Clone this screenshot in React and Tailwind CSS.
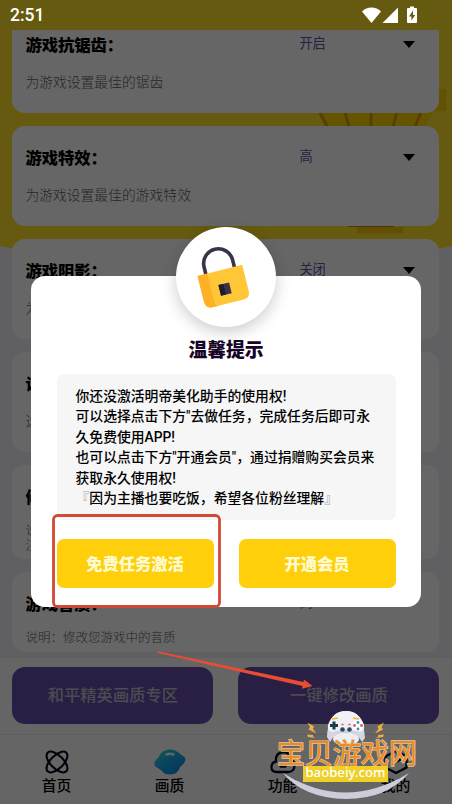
const settings = [
  { title: '游戏抗锯齿：', value: '开启', desc: '为游戏设置最佳的锯齿', box: 'h-[100px]' },
  { title: '游戏特效：', value: '高', desc: '为游戏设置最佳的游戏特效', box: 'h-[100px]' },
  { title: '游戏阴影：', value: '关闭', desc: '为游戏设置最佳的阴影', box: 'h-[100px]' },
  { title: '设备机型：', value: '', desc: '选择设备的机型', box: 'h-[100px]' },
  { title: '修改画质：', value: '', desc: '说明：修改您游戏中的画质\n注：重启游戏后生效', box: 'h-[94px]', small: true },
  { title: '游戏音质：', value: '高', desc: '说明：修改您游戏中的音质', box: 'h-[80px]', small: true },
]

const message = [
  '你还没激活明帝美化助手的使用权!',
  '可以选择点击下方"去做任务，完成任务后即可永',
  '久免费使用APP!',
  '也可以点击下方"开通会员"，通过捐赠购买会员来',
  '获取永久使用权!',
]

function StatusBar() {
  return (
    <header className="relative z-20 flex h-[30px] shrink-0 items-center justify-between bg-[#665a10] pl-[10px] pr-[34px] text-white">
      <span className="pt-[2px] font-[Roboto] text-[17.5px] font-medium leading-none">2:51</span>
      <svg width="58" height="18" viewBox="0 0 58 18" fill="#fff">
        <path d="M2 5.5C7 0 16 0 21 5.5L11.500 17Z" />
        <path d="M38 1.500V17H22.500Z" />
        <path fillRule="evenodd" d="M50 .5h4v1.500h2q1 0 1 1v13q0 1-1 1h-8q-1 0-1-1V3q0-1 1-1h2ZM53 4.500l-4 6h2.400v4l3.800-5.500h-2.200Z" />
      </svg>
    </header>
  )
}

function Backdrop() {
  return (
    <svg className="absolute inset-0" width="452" height="804" viewBox="0 0 452 804">
      <path d="M0 0H452V246Q226 292 0 246Z" fill="#ffe128" />
      <path d="M318 110H434L424 128H328Z" fill="#ffd400" />
      <path d="M419 89h27v22h-27Z" fill="#f9cd08" />
      <path d="M348 221h46v6h-46Z" fill="#d28010" />
      <path d="M357 227h46v6h-46Z" fill="#f5c60c" />
      <path d="M319.500 112l8 15M345 112l4 15M371 112v15M397 112l-4 15M421 112l-6 15" stroke="#e29a08" strokeWidth="3" fill="none" />
    </svg>
  )
}

function SettingCard({ title, value, desc, box, small }) {
  return (
    <section className={`${box} shrink-0 rounded-[13px] bg-white px-[13px] pt-[20px]`}>
      <div className="flex h-[22px] items-center">
        <h2 className="w-[274px] whitespace-nowrap text-[16.300px] font-black leading-none text-black">{title}</h2>
        <span className="mt-[-3px] w-[104px] text-[13.200px] leading-none text-[#674eaa]">{value}</span>
        <svg width="12" height="7" viewBox="0 0 12 7">
          <path d="M0 0H12L6 7Z" />
        </svg>
      </div>
      <p
        className={`whitespace-pre-line font-light text-[#606060] ${
          small ? 'mt-[15px] text-[12.500px] leading-[15px]' : 'mt-[16px] text-[13.800px] leading-[20px]'
        }`}
      >
        {desc}
      </p>
    </section>
  )
}

function HomeIcon() {
  return (
    <svg width="24" height="24" viewBox="0 0 24 24" fill="none" stroke="#05051a" strokeWidth="2.100">
      <ellipse cx="12" cy="12" rx="13.200" ry="6.500" transform="rotate(45 12 12)" />
      <ellipse cx="12" cy="12" rx="13.200" ry="6.500" transform="rotate(-45 12 12)" />
    </svg>
  )
}

function PlanetIcon() {
  return (
    <svg width="32" height="26" viewBox="0 0 32 26">
      <defs>
        <linearGradient id="planet" x1="0" y1="0" x2="1" y2="1">
          <stop stopColor="#42d6d8" />
          <stop offset=".5" stopColor="#15a8e8" />
          <stop offset="1" stopColor="#087cdf" />
        </linearGradient>
      </defs>
      <path
        d="M7 4Q11 .5 16 .5Q21 .5 25 4Q27 6 29 7Q32.500 9 31 12Q30 15 26 18Q24 25.500 16 25.500Q10 25.500 8 22Q6 20 3 18.500Q-.5 17 .5 13Q2 10 4.500 8.500Q5.500 6 7 4Z"
        fill="url(#planet)"
      />
      <path d="M12.500 5.500Q16 4 19.500 5.500" stroke="#e6ffff" strokeWidth="2.500" strokeLinecap="round" fill="none" />
    </svg>
  )
}

function CloudIcon() {
  return (
    <svg width="26" height="24" viewBox="0 0 26 24" fill="none" stroke="#05051a" strokeWidth="2.300" strokeLinecap="round">
      <path d="M7 22Q1 22 1.500 16.500Q2 12 6 11.500Q5 3 13 2Q20 2 20.500 9Q25 11 24.500 16Q24 22 18 22Z" />
      <path d="M10.500 16.500h5" />
    </svg>
  )
}

function HexIcon() {
  return (
    <svg width="26" height="26" viewBox="0 0 26 26" fill="none" stroke="#05051a" strokeWidth="2.400" strokeLinejoin="round">
      <path d="M13 2L23.500 7.500V18.500L13 24L2.500 18.500V7.500Z" />
      <path d="M8 10l5 3 5-3" />
    </svg>
  )
}

const tabs = [
  { label: '首页', Icon: HomeIcon },
  { label: '画质', Icon: PlanetIcon },
  { label: '功能', Icon: CloudIcon },
  { label: '我的', Icon: HexIcon },
]

function BottomArea() {
  return (
    <footer className="relative flex h-[146px] shrink-0 flex-col bg-[#fcfcfc]">
      <div className="flex gap-[25px] pl-[12.400px] pr-[12.600px] pt-[9px] text-[16.300px] font-medium text-[#c0bac8]">
        <button className="h-[57px] flex-1 rounded-[13px] bg-[#674eaa] pb-[3px]">和平精英画质专区</button>
        <button className="h-[57px] flex-1 rounded-[13px] bg-[#674eaa] pb-[3px]">一键修改画质</button>
      </div>
      <nav className="mt-[10px] flex flex-1 border-t border-[#e8e8e8]">
        {tabs.map(({ label, Icon }) => (
          <div key={label} className="flex flex-1 flex-col items-center pt-[13px]">
            <div className="flex h-[27px] items-center">
              <Icon />
            </div>
            <span className="text-[14.800px] font-medium leading-[20px] text-black">{label}</span>
          </div>
        ))}
      </nav>
    </footer>
  )
}

function LockBadge() {
  return (
    <div className="absolute -top-[49px] left-[145px] h-[100px] w-[100px] rounded-full bg-white shadow-[0_5px_16px_rgba(0,0,0,0.2)]">
      <svg width="100" height="100" viewBox="0 0 100 100">
        <g transform="translate(-.5 1) rotate(-14 47 53)">
          <path d="M32.500 46V35a14.700 14.700 0 0 1 29.400 0V46" fill="none" stroke="#393347" strokeWidth="3.600" />
          <path d="M24 42H70V69Q70 76 63 76H31Q24 76 24 69Z" fill="#ffc738" />
          <path d="M24 42H34V69Q34 76 38 76H31Q24 76 24 69Z" fill="#ffb126" />
          <rect x="42" y="56" width="11" height="11" fill="#393347" />
          <rect x="42" y="56" width="5" height="11" fill="#201d2a" />
        </g>
      </svg>
    </div>
  )
}

function ActivateDialog() {
  return (
    <div className="absolute left-[31px] top-[276px] z-20 flex h-[331px] w-[390px] flex-col rounded-[14px] bg-white px-[25.500px]">
      <LockBadge />
      <h1 className="relative mt-[60px] text-center text-[18.800px] font-black leading-[26px] text-[#160527]">温馨提示</h1>
      <div className="mt-[12px] h-[146px] w-[339px] whitespace-nowrap rounded-[7px] bg-[#f6f6f6] pl-[19px] pt-[11.500px] font-[Roboto,'Noto_Sans_CJK_SC',sans-serif] text-[13.820px] font-medium leading-[20.500px] text-black">
        {message.map((line) => (
          <p key={line}>{line}</p>
        ))}
        <p>
          <span className="text-[#aaa]">『</span>因为主播也要吃饭，希望各位粉丝理解<span className="text-[#aaa]">』</span>
        </p>
      </div>
      <div className="mt-[19px] flex gap-[25px] text-[16.300px] font-black text-[#fffbd0]">
        <button className="h-[49px] flex-1 rounded-[7px] bg-[#ffcf0c]">免费任务激活</button>
        <button className="h-[49px] flex-1 rounded-[7px] bg-[#ffcf0c]">开通会员</button>
      </div>
    </div>
  )
}

function Marks() {
  return (
    <svg className="absolute inset-0 z-30" width="452" height="804" viewBox="0 0 452 804">
      <rect x="53.500" y="515.500" width="166" height="91" rx="4" fill="none" stroke="#d14a35" strokeWidth="2.800" />
      <path d="M158 651.300L303.500 682L304 679.500L312.500 686L302 688.800L302.500 686L158 653Z" fill="#e84c32" />
    </svg>
  )
}

function SiteBadge() {
  return (
    <div className="absolute left-[270px] top-[700px] z-40 h-[104px] w-[160px]">
      <svg className="absolute inset-0" width="160" height="104" viewBox="0 0 160 104">
        <path d="M13 73Q75 112 139 73Q117 99 76 99Q33 98 13 73Z" fill="#cdccdb" />
        <path d="M57 37C58 21 63 11 76 11S94 21 95 38L92 42Q88 35 83 34Q76 31 69 34Q64 35 60 42Z" fill="#d5d5e2" />
        <path d="M58 25Q63 11 76 11Q89 11 94 25Q95 31 90 32Q76 27 62 32Q57 31 58 25Z" fill="#f0f0f5" />
        <ellipse cx="76" cy="39" rx="13" ry="6.500" fill="#eeeef2" />
        <path d="M60 25.500h8M64 21.500v8" stroke="#173c50" strokeWidth="3" />
        <circle cx="88" cy="25.500" r="5.500" fill="#fff" />
        <g fill="#e45364">
          <circle cx="84.500" cy="25.500" r="1.400" />
          <circle cx="91.500" cy="25.500" r="1.400" />
        </g>
        <g fill="#269bb0">
          <circle cx="88" cy="22.500" r="1.400" />
          <circle cx="88" cy="29" r="1.400" />
        </g>
        <g fill="#244d61">
          <circle cx="72.500" cy="29.500" r="2.300" />
          <circle cx="79.500" cy="29.500" r="2.300" />
        </g>
        <path d="M62 19l6-1M83 18l6 1" stroke="#edb337" strokeWidth="1.500" />
        <path d="M71.500 24.500h2M78.500 24.500h2" stroke="#e45364" strokeWidth="1.500" />
        <path
          d="M37.500 22.500l6.500 4-1 2.500 3.500 4.500-8-4 1.500-2.500ZM37 34.500l6 .5v1.500l2 1.500-7-1ZM114 22.500l-6.500 4 1 2.500-3.500 4.500 8-4-1.500-2.500ZM114 34.500l-6 .5v1.500l-2 1.500 7-1Z"
          fill="#efb03d"
        />
      </svg>
      <div className="absolute left-[7px] top-[36px] whitespace-nowrap text-[28px] font-normal leading-[32px] text-[#f08a1e] [-webkit-text-stroke:1.400px_#dcc9a8] [paint-order:stroke_fill]">
        宝贝游戏网
      </div>
      <div className="absolute left-[33px] top-[66px] flex h-[16px] w-[85px] items-center justify-center bg-[#efcf28] pb-[2px] font-['Noto_Sans'] text-[13.200px] font-medium leading-none text-white">
        baobeiy.com
      </div>
    </div>
  )
}

export default function App() {
  return (
    <div className="relative flex h-[804px] w-[452px] flex-col overflow-hidden bg-[#f1f1f7] font-['Noto_Sans_CJK_SC',sans-serif]">
      <Backdrop />
      <StatusBar />
      <main className="relative min-h-0 flex-1 overflow-hidden">
        <div className="-mt-[17px] flex flex-col gap-[13px] pl-[12.400px] pr-[12.600px]">
          {settings.map((item) => (
            <SettingCard key={item.title} {...item} />
          ))}
        </div>
      </main>
      <BottomArea />
      <div className="absolute inset-0 z-10 bg-black/60" />
      <ActivateDialog />
      <Marks />
      <SiteBadge />
    </div>
  )
}
